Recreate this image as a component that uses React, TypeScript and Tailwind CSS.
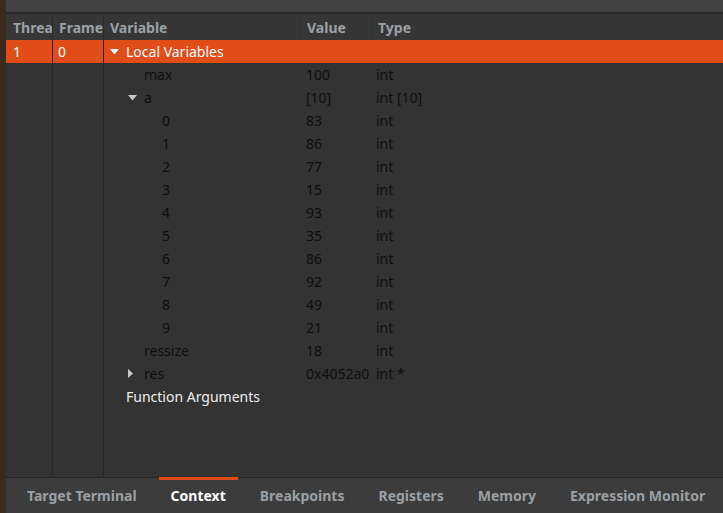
import React from 'react'

const font = { fontFamily: '"Noto Sans", "Open Sans", sans-serif' }

type Row = { name: string; value?: string; type?: string; indent: number; arrow?: 'down' | 'right'; light?: boolean; selected?: boolean }

const rows: Row[] = [
  { name: 'Local Variables', indent: 0, arrow: 'down', selected: true },
  { name: 'max', value: '100', type: 'int', indent: 1 },
  { name: 'a', value: '[10]', type: 'int [10]', indent: 1, arrow: 'down' },
  ...['83', '86', '77', '15', '93', '35', '86', '92', '49', '21'].map((v, i) => ({ name: String(i), value: v, type: 'int', indent: 2 })),
  { name: 'ressize', value: '18', type: 'int', indent: 1 },
  { name: 'res', value: '0x4052a0', type: 'int *', indent: 1, arrow: 'right' },
  { name: 'Function Arguments', indent: 0, light: true },
]

function Arrow({ dir, white }: { dir: 'down' | 'right'; white?: boolean }) {
  const fill = white ? '#ffffff' : '#c8c8c8'
  return dir === 'down' ? (
    <svg width="9" height="6" viewBox="0 0 9 6"><path d="M0 0h9L4.5 5.5z" fill={fill} /></svg>
  ) : (
    <svg width="5" height="9" viewBox="0 0 5 9"><path d="M0 0l5 4.5L0 9z" fill={fill} /></svg>
  )
}

const tabs = ['Target Terminal', 'Context', 'Breakpoints', 'Registers', 'Memory', 'Expression Monitor']

export default function App() {
  return (
    <div className="w-[723px] h-[513px] flex bg-[#3b2a1f] overflow-hidden" style={font}>
      <div className="w-[6px] shrink-0" />
      <div className="flex-1 flex flex-col">
        {/* top strip */}
        <div className="h-[12px] bg-[#424242]" />
        <div className="h-[2px] bg-[#2a2a2a]" />

        {/* header */}
        <div className="h-[26px] flex bg-[#363636] text-[14px] font-bold text-[#9ba1a6]">
          <div className="w-[46px] pl-[7px] flex items-center overflow-hidden whitespace-nowrap">Threa</div>
          <div className="w-px bg-[#2c2c2c]" />
          <div className="w-[50px] pl-[6px] flex items-center overflow-hidden whitespace-nowrap">Frame</div>
          <div className="w-px bg-[#2c2c2c]" />
          <div className="w-[196px] pl-[6px] flex items-center">Variable</div>
          <div className="w-px bg-[#2f2f2f]" />
          <div className="w-[70px] pl-[6px] flex items-center">Value</div>
          <div className="w-px bg-[#2f2f2f]" />
          <div className="flex-1 pl-[6px] flex items-center">Type</div>
        </div>

        {/* body */}
        <div className="flex-1 flex bg-[#333333] text-[14px]">
          <div className="w-[46px]">
            <div className="h-[23px] bg-[#e14d18] text-white pl-[7px] flex items-center">1</div>
          </div>
          <div className="w-px bg-[#262626]" />
          <div className="w-[50px]">
            <div className="h-[23px] bg-[#e14d18] text-white pl-[5px] flex items-center">0</div>
          </div>
          <div className="w-px bg-[#262626]" />
          <div className="flex-1 flex flex-col">
            {rows.map((r, i) => (
              <div key={i} className={`h-[23px] flex items-center ${r.selected ? 'bg-[#e14d18] text-white' : r.light ? 'text-[#eeeeee]' : 'text-[#0e0e0e]'}`}>
                <div className="w-[197px] flex items-center" style={{ paddingLeft: 6 + r.indent * 18 }}>
                  <div className="w-[16px] flex items-center">{r.arrow && <Arrow dir={r.arrow} white={r.selected} />}</div>
                  <span className="whitespace-nowrap">{r.name}</span>
                </div>
                <div className="w-[71px] pl-[5px] whitespace-nowrap">{r.value}</div>
                <div className="flex-1 pl-[4px] whitespace-nowrap">{r.type}</div>
              </div>
            ))}
          </div>
        </div>

        {/* tabs */}
        <div className="h-px bg-[#262626]" />
        <div className="h-[35px] bg-[#3c3c3c] flex gap-[10px] pl-[9px] text-[14px] font-bold">
          {tabs.map(t => (
            <div key={t} className={`px-3 flex items-center whitespace-nowrap relative ${t === 'Context' ? 'text-white' : 'text-[#9ba0a5]'}`}>
              {t === 'Context' && <div className="absolute left-0 right-0 -top-px h-[3px] bg-[#e14d18]" />}
              {t}
            </div>
          ))}
        </div>
      </div>
    </div>
  )
}
